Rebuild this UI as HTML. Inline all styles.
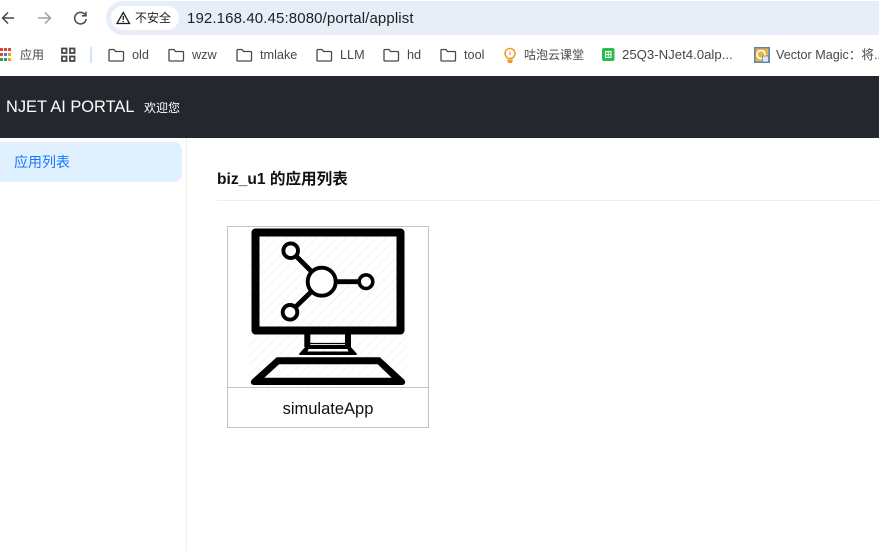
<!DOCTYPE html>
<html lang="zh">
<head>
<meta charset="utf-8">
<title>NJET AI PORTAL</title>
<style>
html,body{margin:0;padding:0;background:#fff}
body{width:879px;height:550px;overflow:hidden;position:relative;font-family:"Liberation Sans","Noto Sans CJK SC",sans-serif}
.a{position:absolute;white-space:nowrap}
.bm{position:absolute;top:47px;font-size:12.7px;line-height:16px;color:#474747;white-space:nowrap}
svg{position:absolute;overflow:visible}
</style>
</head>
<body>
<!-- browser chrome -->
<svg style="left:0;top:9px" width="100" height="18" fill="none" stroke-width="1.5">
<path d="M14 9H2.500M8 3.500L2.500 9L8 14.500" stroke="#474747"/>
<path d="M38 9H50M45 3.500L50.500 9L45 14.500" stroke="#a0a0a0"/>
<path d="M85 5.500A5.800 5.800 0 1 0 86.200 10M86 2.800V6.800H82" stroke="#474747"/>
</svg>
<div class="a" style="left:106px;top:1px;width:790px;height:34px;border-radius:17px;background:#e8eef8"></div>
<div class="a" style="left:111px;top:6px;width:68px;height:24px;border-radius:12px;background:#fff"></div>
<svg style="left:116px;top:11px" width="15" height="14" fill="none" stroke="#1f1f1f" stroke-width="1.300"><path d="M7.300 1.500L13.500 12.500H1Z"/><path d="M7.300 5V9M7.300 10V11.300"/></svg>
<div class="a" style="left:135px;top:10px;font-size:12px;line-height:16px;color:#1f1f1f">不安全</div>
<div class="a" style="left:187px;top:10px;font-size:15px;line-height:18px;color:#1f1f1f;letter-spacing:.12px">192.168.40.45:8080/portal/applist</div>

<!-- bookmarks -->
<svg style="left:0;top:47px" width="13" height="16">
<rect x="0" y="1" width="3" height="3" fill="#d9433a"/><rect x="4" y="1" width="3" height="3" fill="#d9433a"/><rect x="8" y="1" width="3" height="3" fill="#e0473c"/>
<rect x="0" y="6" width="3" height="3" fill="#e0473c"/><rect x="4" y="6" width="3" height="3" fill="#3a7be0"/><rect x="8" y="6" width="3" height="3" fill="#f0a020"/>
<rect x="0" y="11" width="3" height="3" fill="#2f9e4f"/><rect x="4" y="11" width="3" height="3" fill="#2f9e4f"/><rect x="8" y="11" width="3" height="3" fill="#f0a020"/>
</svg>
<div class="bm" style="left:20px;font-size:12px">应用</div>
<svg style="left:61px;top:47px" width="15" height="16" fill="none" stroke="#474747" stroke-width="1.800">
<rect x="1" y="1.500" width="4.500" height="4.500"/><rect x="9" y="1.500" width="4.500" height="4.500"/><rect x="1" y="9.500" width="4.500" height="4.500"/><rect x="9" y="9.500" width="4.500" height="4.500"/>
</svg>
<div class="a" style="left:90px;top:47px;width:2px;height:16px;background:#d3e3fd"></div>
<svg style="left:0;top:47px" width="879" height="16" fill="none" stroke="#474747" stroke-width="1.300">
<path d="M109 3.500a1 1 0 0 1 1-1h4l1.500 2h7a1 1 0 0 1 1 1v7.500a1 1 0 0 1-1 1h-12.500a1 1 0 0 1-1-1Z"/>
<path d="M169 3.500a1 1 0 0 1 1-1h4l1.500 2h7a1 1 0 0 1 1 1v7.500a1 1 0 0 1-1 1h-12.500a1 1 0 0 1-1-1Z"/>
<path d="M237 3.500a1 1 0 0 1 1-1h4l1.500 2h7a1 1 0 0 1 1 1v7.500a1 1 0 0 1-1 1h-12.500a1 1 0 0 1-1-1Z"/>
<path d="M317 3.500a1 1 0 0 1 1-1h4l1.500 2h7a1 1 0 0 1 1 1v7.500a1 1 0 0 1-1 1h-12.500a1 1 0 0 1-1-1Z"/>
<path d="M384 3.500a1 1 0 0 1 1-1h4l1.500 2h7a1 1 0 0 1 1 1v7.500a1 1 0 0 1-1 1h-12.500a1 1 0 0 1-1-1Z"/>
<path d="M441 3.500a1 1 0 0 1 1-1h4l1.500 2h7a1 1 0 0 1 1 1v7.500a1 1 0 0 1-1 1h-12.500a1 1 0 0 1-1-1Z"/>
</svg>
<div class="bm" style="left:132px">old</div>
<div class="bm" style="left:192px">wzw</div>
<div class="bm" style="left:260px">tmlake</div>
<div class="bm" style="left:340px">LLM</div>
<div class="bm" style="left:407px">hd</div>
<div class="bm" style="left:464px">tool</div>
<svg style="left:503px;top:47px" width="14" height="17" fill="none">
<circle cx="7" cy="6.500" r="5" stroke="#ee9a30" stroke-width="1.500"/><path d="M7 4.500V8" stroke="#ee9a30" stroke-width="1.200"/>
<path d="M4 12.500H10L9 16H5Z" fill="#ee9a30"/>
</svg>
<div class="bm" style="left:524px;font-size:12px">咕泡云课堂</div>
<svg style="left:602px;top:48px" width="13" height="14">
<rect width="12.500" height="13" rx="2" fill="#2dbb4a"/>
<rect x="3.500" y="3.500" width="5.500" height="6" fill="none" stroke="#fff" stroke-width="1"/><path d="M6.200 3.500V9.500M3.500 6.500H9" stroke="#fff" stroke-width="1"/>
</svg>
<div class="bm" style="left:622px;font-size:13.200px">25Q3-NJet4.0alp...</div>
<svg style="left:754px;top:47px" width="16" height="16">
<rect width="16" height="16" fill="#5f84ad"/><rect x="1.500" y="1.500" width="13" height="13" fill="#e8b640"/>
<circle cx="7" cy="7.500" r="4" fill="none" stroke="#fff" stroke-width="1.500"/>
<rect x="8.500" y="9" width="6" height="6" fill="#dfe8f2" stroke="#5f84ad" stroke-width=".8"/>
</svg>
<div class="bm" style="left:776px;font-size:12.600px">Vector Magic：将...</div>

<!-- header -->
<div class="a" style="left:0;top:76px;width:879px;height:62px;background:#24272e"></div>
<div class="a" style="left:6px;top:97px;font-size:16.400px;line-height:20px;color:#fff">NJET AI PORTAL</div>
<div class="a" style="left:144px;top:100px;font-size:12px;line-height:17px;color:#fff">欢迎您</div>

<!-- sidebar -->
<div class="a" style="left:186px;top:138px;width:1px;height:412px;background:#eeeeee"></div>
<div class="a" style="left:0;top:142px;width:182px;height:40px;background:#e0f0ff;border-radius:0 8px 8px 0"></div>
<div class="a" style="left:14px;top:153px;font-size:14px;line-height:18px;color:#1677ff">应用列表</div>

<!-- main -->
<div class="a" style="left:217px;top:170px;font-size:15.600px;line-height:19px;font-weight:700;color:#111">biz_u1 的应用列表</div>
<div class="a" style="left:217px;top:200px;width:662px;height:1px;background:#eeeeee"></div>

<!-- card -->
<div class="a" style="left:227px;top:226px;width:200px;height:200px;border:1px solid #c4c4c4"></div>
<div class="a" style="left:228px;top:387px;width:200px;height:1px;background:#c4c4c4"></div>
<svg style="left:228px;top:227px" width="200" height="160" fill="none" stroke="#000">
<defs>
<pattern id="h" width="7" height="7" patternUnits="userSpaceOnUse" patternTransform="rotate(45)"><rect width="1.500" height="7" fill="#f6f6f6" stroke="none"/></pattern>
</defs>
<rect x="21" y="0" width="158" height="160" fill="url(#h)" stroke="none"/>
<rect x="27.500" y="5.500" width="145" height="98" stroke-width="8" stroke-linejoin="round"/>
<path d="M68.500 29.500L83.500 44.500M108 54.700H131M68 79.500L83 65" stroke-width="4.800"/>
<circle cx="93.700" cy="54.700" r="14" stroke-width="3.900" fill="#fff"/>
<circle cx="62.700" cy="23.700" r="7.300" stroke-width="3.900" fill="#fff"/>
<circle cx="138" cy="54.700" r="6.800" stroke-width="3.500" fill="#fff"/>
<circle cx="62" cy="85.300" r="7.300" stroke-width="3.900" fill="#fff"/>
<path d="M79.300 106V120M120 106V120" stroke-width="6"/>
<path d="M79 116.500H121" stroke-width="1.200"/>
<path fill="#000" stroke="none" fill-rule="evenodd" d="M79 118H121L128.700 126.500Q129.500 128 127.500 128H72.500Q70.500 128 71.300 126.500ZM80.500 122L79.500 124.500H120.500L119.500 122Z"/>
<path fill="#000" stroke="none" fill-rule="evenodd" d="M48.700 130.300H152L176 152.500Q178 155 176.500 157Q175.500 158 174 158H26Q24.500 158 23.500 157Q22 155 24 152.500ZM51 137.300L36.300 150.700H163.700L149.700 137.300Z"/>
</svg>
<div class="a" style="left:228px;top:399px;width:200px;text-align:center;font-size:16.500px;line-height:20px;color:#111">simulateApp</div>
</body>
</html>
